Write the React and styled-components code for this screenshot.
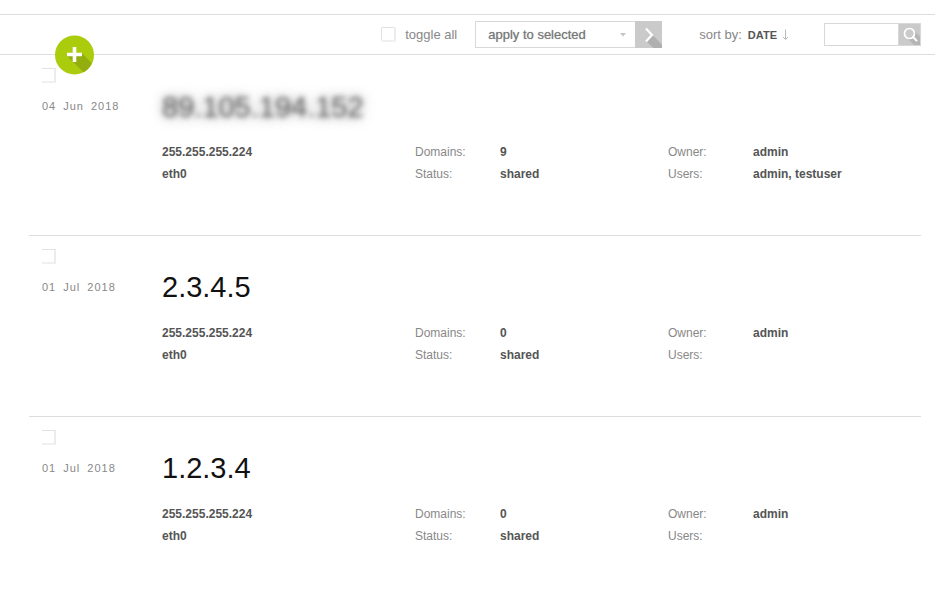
import React, { useState } from "react";
import styled, { createGlobalStyle } from "styled-components";

const GlobalStyle = createGlobalStyle`
  * {
    box-sizing: border-box;
  }
  body {
    margin: 0;
    background-color: #fff;
    color: #555;
    font-family: "Liberation Sans", Arial, sans-serif;
    font-size: 12px;
  }
`;

const Toolbar = styled.header`
  position: relative;
  display: flex;
  justify-content: flex-end;
  align-items: center;
  height: 41px;
  margin-top: 14px;
  padding-right: 14px;
  border-top: 1px solid #ddd;
  border-bottom: 1px solid #ddd;
  color: #888;
  font-size: 13px;
`;

const AddButton = styled.button`
  position: absolute;
  left: 54px;
  top: 20px;
  width: 40px;
  height: 40px;
  padding: 0;
  border: 0;
  border-radius: 50%;
  background: none;
  cursor: pointer;
  svg {
    display: block;
  }
`;

const ToggleAll = styled.label`
  display: flex;
  align-items: center;
  gap: 9px;
  margin-right: 18px;
`;

const Checkbox = styled.input`
  appearance: none;
  display: block;
  width: 15px;
  height: 15px;
  margin: 0;
  border: 1px solid #e2e2e2;
  border-right: 2px solid #ececec;
  border-bottom: 2px solid #f0f0f0;
  border-radius: 2px;
  background-color: #fff;
  &:checked {
    background-color: #9fc20f;
  }
`;

const RowCheckbox = styled(Checkbox)`
  width: 14px;
  border-left: 0;
  border-radius: 0;
`;

const BulkForm = styled.form`
  position: relative;
  display: flex;
  margin-right: 37px;
`;

const BulkSelect = styled.select`
  appearance: none;
  width: 160px;
  height: 27px;
  padding: 0 12px;
  border: 1px solid #d8d8d8;
  border-right: 0;
  border-radius: 0;
  background-color: #fff;
  color: #777;
  font-family: inherit;
  font-size: 13px;
  text-shadow: 0 0 1px #aaa;
`;

const Caret = styled.svg`
  position: absolute;
  left: 145px;
  top: 12px;
  pointer-events: none;
`;

const IconButton = styled.button`
  width: ${(props) => props.$size}px;
  height: ${(props) => props.$size}px;
  padding: 0;
  border: 0;
  background-color: #cacaca;
  cursor: pointer;
  svg {
    display: block;
  }
`;

const SortBy = styled.div`
  display: flex;
  align-items: center;
  gap: 6px;
  margin-right: 36px;
`;

const SortLink = styled.a`
  display: flex;
  align-items: center;
  gap: 5px;
  color: #555;
  font-size: 11px;
  font-weight: bold;
  text-decoration: none;
`;

const SearchForm = styled.form`
  display: flex;
`;

const SearchInput = styled.input`
  width: 74px;
  height: 23px;
  padding: 0 6px;
  border: 1px solid #d8d8d8;
  border-right: 0;
  border-radius: 0;
  color: #555;
  font-family: inherit;
  font-size: 12px;
  outline: none;
`;

const List = styled.main`
  padding: 0 14px 0 29px;
`;

const Unit = styled.article`
  display: flex;
  padding: 13px 0 50px 13px;
  border-bottom: 1px solid #ddd;
  &:last-child {
    border-bottom: 0;
  }
`;

const Side = styled.div`
  flex: 0 0 120px;
`;

const DateLine = styled.time`
  display: flex;
  gap: 7px;
  margin-top: 16px;
  color: #888;
  font-size: 11px;
  line-height: 14px;
  letter-spacing: 1px;
`;

const Body = styled.div`
  flex: 1;
  padding-top: 21px;
`;

const Address = styled.h2`
  width: fit-content;
  margin: 0 0 18px;
  color: ${(props) => (props.$hidden ? "transparent" : "#111")};
  font-size: 29px;
  font-weight: normal;
  line-height: 34px;
  text-shadow: ${(props) =>
    props.$hidden
      ? "0 1px 5px rgba(0, 0, 0, 0.5), 0 1px 12px rgba(0, 0, 0, 0.5)"
      : "none"};
`;

const Columns = styled.div`
  display: grid;
  grid-template-columns: repeat(3, 1fr);
  line-height: 22px;
`;

const Plain = styled.div`
  font-weight: bold;
`;

const Details = styled.dl`
  display: grid;
  grid-template-columns: 85px 1fr;
  grid-auto-rows: 22px;
  margin: 0;
`;

const Term = styled.dt`
  color: #888;
`;

const Value = styled.dd`
  margin: 0;
  font-weight: bold;
`;

const units = [
  {
    date: ["04", "Jun", "2018"],
    ip: "89.105.194.152",
    hidden: true,
    domains: 9,
    users: "admin, testuser",
  },
  { date: ["01", "Jul", "2018"], ip: "2.3.4.5", domains: 0, users: "" },
  { date: ["01", "Jul", "2018"], ip: "1.2.3.4", domains: 0, users: "" },
];

const IpUnit = ({ unit, checked, onToggle }) => {
  return (
    <Unit>
      <Side>
        <RowCheckbox
          type="checkbox"
          aria-label={`Select ${unit.ip}`}
          checked={checked}
          onChange={onToggle}
        />
        <DateLine>
          {unit.date.map((part) => (
            <span key={part}>{part}</span>
          ))}
        </DateLine>
      </Side>
      <Body>
        <Address $hidden={unit.hidden}>{unit.ip}</Address>
        <Columns>
          <Plain>
            <div>255.255.255.224</div>
            <div>eth0</div>
          </Plain>
          <Details>
            <Term>Domains:</Term>
            <Value>{unit.domains}</Value>
            <Term>Status:</Term>
            <Value>shared</Value>
          </Details>
          <Details>
            <Term>Owner:</Term>
            <Value>admin</Value>
            <Term>Users:</Term>
            <Value>{unit.users}</Value>
          </Details>
        </Columns>
      </Body>
    </Unit>
  );
};

const App = () => {
  const [selected, setSelected] = useState([]);
  const all = selected.length === units.length;

  const toggle = (ip) =>
    setSelected((list) =>
      list.includes(ip) ? list.filter((item) => item !== ip) : [...list, ip]
    );

  return (
    <>
      <GlobalStyle />
      <Toolbar>
        <AddButton type="button" aria-label="Add IP address">
          <svg width="40" height="40" viewBox="0 0 40 40">
            <circle cx="20.5" cy="20" r="19.5" fill="#aacc0d" />
            <path
              d="M28 18L37.8 28.500A19.5 19.5 0 0 1 29.500 37.300L13 21z"
              fill="#93ae0e"
            />
            <path d="M20.5 12v15M13 19.5h15" stroke="#fff" strokeWidth="3.6" />
          </svg>
        </AddButton>
        <ToggleAll>
          <Checkbox
            type="checkbox"
            checked={all}
            onChange={() => setSelected(all ? [] : units.map((u) => u.ip))}
          />
          toggle all
        </ToggleAll>
        <BulkForm onSubmit={(e) => e.preventDefault()}>
          <BulkSelect aria-label="Bulk action">
            <option>apply to selected</option>
            <option>delete</option>
          </BulkSelect>
          <Caret width="6" height="4" viewBox="0 0 6 4">
            <path d="M0 0h6L3 3.5z" fill="#c4c4c4" />
          </Caret>
          <IconButton $size={27} type="submit" aria-label="Apply">
            <svg width="27" height="27" viewBox="0 0 27 27">
              <path d="M17.5 14L27 23.5V27H18.5L11 20z" fill="#b0b0b0" />
              <path
                d="M11 7.5L17 14L11 20.5"
                fill="none"
                stroke="#fff"
                strokeWidth="2.2"
              />
            </svg>
          </IconButton>
        </BulkForm>
        <SortBy>
          sort by:
          <SortLink href="#date">
            DATE
            <svg width="6" height="12" viewBox="0 0 6 12">
              <path
                d="M3.5 0.5v10M1 8L3.5 10.5L6 8"
                fill="none"
                stroke="#bbb"
              />
            </svg>
          </SortLink>
        </SortBy>
        <SearchForm onSubmit={(e) => e.preventDefault()}>
          <SearchInput type="text" aria-label="Search" />
          <IconButton $size={23} type="submit" aria-label="Search">
            <svg width="23" height="23" viewBox="0 0 23 23">
              <path d="M15.5 7L23 14.5V23H17L9 15z" fill="#b5b5b5" />
              <circle cx="11.5" cy="10.5" r="5.5" fill="#cacaca" />
              <circle
                cx="11.5"
                cy="10.5"
                r="5"
                fill="none"
                stroke="#fff"
                strokeWidth="1.7"
              />
              <path
                d="M15 14L18.5 17.5"
                stroke="#fff"
                strokeWidth="2"
                strokeLinecap="round"
              />
              <rect
                x="0.5"
                y="0.5"
                width="22"
                height="22"
                fill="none"
                stroke="#d8d8d8"
              />
            </svg>
          </IconButton>
        </SearchForm>
      </Toolbar>
      <List>
        {units.map((unit) => (
          <IpUnit
            key={unit.ip}
            unit={unit}
            checked={selected.includes(unit.ip)}
            onToggle={() => toggle(unit.ip)}
          />
        ))}
      </List>
    </>
  );
};

export default App;
